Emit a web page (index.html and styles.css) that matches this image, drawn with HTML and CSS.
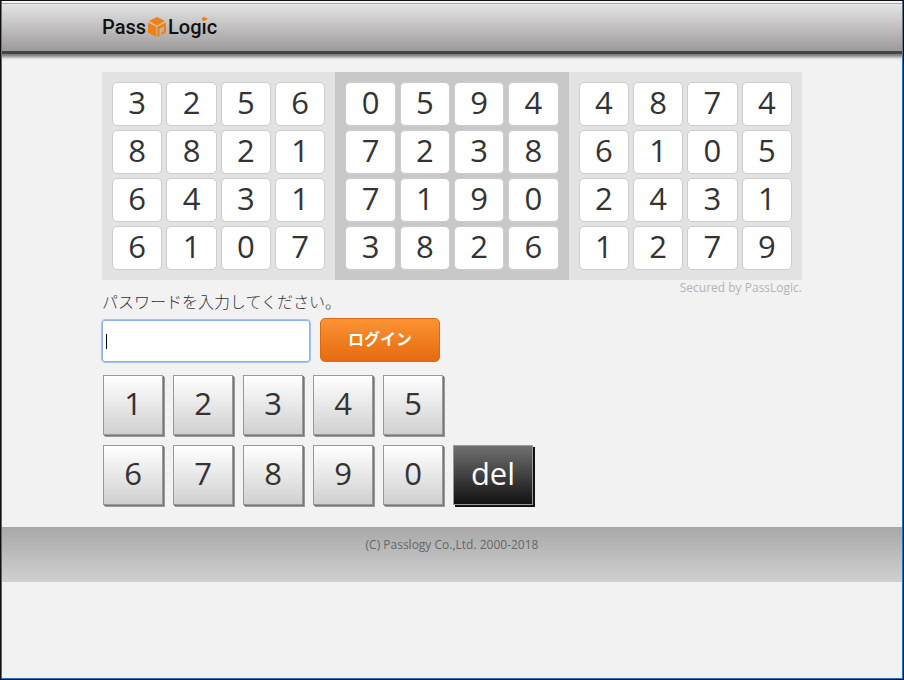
FILE: index.html
```html
<!DOCTYPE html>
<html lang="ja">
<head>
  <meta charset="utf-8">
  <title>PassLogic</title>
  <link rel="stylesheet" href="styles.css">
</head>
<body>
  <header class="header">
    <div class="wrap">
      <a class="logo" href="#">
        <span>Pass</span>
        <svg class="cube" viewBox="0 0 18 20" aria-hidden="true">
          <path d="M9 0 L17 4 L9 8.4 L1 4 Z"/>
          <path d="M0 5.4 L8.3 9.8 V20 L0 15.4 Z"/>
          <path fill-rule="evenodd" d="M18 5.4 L9.3 9.8 V20 L11.6 18.7 V11.9 L15.8 9.6 V13.8 L13.2 15.2 V17.9 L18 15.4 Z M13.2 12.4 V13.6 L14.4 13 V11.8 Z"/>
        </svg>
        <span>Log<span class="key-i">ı</span>c</span>
      </a>
    </div>
  </header>

  <main class="wrap">
    <div class="matrix">
      <div class="block">
        <span>3</span><span>2</span><span>5</span><span>6</span>
        <span>8</span><span>8</span><span>2</span><span>1</span>
        <span>6</span><span>4</span><span>3</span><span>1</span>
        <span>6</span><span>1</span><span>0</span><span>7</span>
      </div>
      <div class="block dark">
        <span>0</span><span>5</span><span>9</span><span>4</span>
        <span>7</span><span>2</span><span>3</span><span>8</span>
        <span>7</span><span>1</span><span>9</span><span>0</span>
        <span>3</span><span>8</span><span>2</span><span>6</span>
      </div>
      <div class="block">
        <span>4</span><span>8</span><span>7</span><span>4</span>
        <span>6</span><span>1</span><span>0</span><span>5</span>
        <span>2</span><span>4</span><span>3</span><span>1</span>
        <span>1</span><span>2</span><span>7</span><span>9</span>
      </div>
    </div>
    <p class="secured">Secured by PassLogic.</p>

    <form id="loginForm">
      <label for="password">パスワードを入力してください。</label>
      <div class="login-row">
        <input type="password" id="password" name="password">
        <button type="submit" class="login">ログイン</button>
      </div>
      <div class="keypad">
        <button type="button">1</button>
        <button type="button">2</button>
        <button type="button">3</button>
        <button type="button">4</button>
        <button type="button">5</button>
        <button type="button">6</button>
        <button type="button">7</button>
        <button type="button">8</button>
        <button type="button">9</button>
        <button type="button">0</button>
        <button type="button" class="del">del</button>
      </div>
    </form>
  </main>

  <footer class="footer">(C) Passlogy Co.,Ltd. 2000-2018</footer>

  <script>
    const password = document.getElementById('password');
    document.querySelectorAll('.keypad button').forEach(function(key) {
      key.onclick = function() {
        if (key.className === 'del') {
          password.value = password.value.slice(0, -1);
        } else {
          password.value += key.innerText;
        }
      };
    });
    document.getElementById('loginForm').onsubmit = function(e) {
      e.preventDefault();
    };
  </script>
</body>
</html>
```
FILE: styles.css
```css
* {
  box-sizing: border-box;
}
html {
  height: 100%;
  background: #f2f2f2;
}
body {
  margin: 0;
  min-height: 100%;
  border: 1px solid #0f0f12;
  background: #f2f2f2;
  box-shadow: inset 1px 0 #1a78c8, inset -1px -1px #1a78c8;
  padding: 0 1px 1px;
  color: #333;
  font-family: "Open Sans", "Noto Sans CJK JP", sans-serif;
  font-size: 16px;
}
.wrap {
  max-width: 700px;
  margin: 0 auto;
}
.header {
  padding-top: 12px;
  height: 50px;
  border-top: 2px solid #f5f3f6;
  background: linear-gradient(#aaa5ab 1px, #e4e4e4 1px, #9d9a9b);
  box-shadow: 0 3px #444, 0 4px 3px 2px #777;
}
.logo {
  display: flex;
  align-items: center;
  gap: 2px;
  height: 24px;
  color: #111;
  font-family: Roboto, sans-serif;
  font-size: 20px;
  font-weight: 500;
  line-height: 24px;
  text-decoration: none;
}
.cube {
  width: 18px;
  height: 20px;
  fill: #f08010;
}
.key-i {
  position: relative;
}
/* orange cross over the i */
.key-i::before {
  content: "";
  position: absolute;
  top: 2px;
  left: 0;
  width: 5px;
  height: 4px;
  background: linear-gradient(#f08010, #f08010) center / 2px 4px no-repeat,
    linear-gradient(#f08010, #f08010) center / 5px 2px no-repeat;
}
.matrix {
  display: grid;
  grid-template-columns: repeat(3, 1fr);
  margin-top: 21px;
}
.block {
  display: grid;
  grid-template-columns: repeat(4, 1fr);
  gap: 4px;
  padding: 10px;
  background: #e2e2e2;
}
.block.dark {
  background: #c8c8c8;
}
.block span {
  height: 44px;
  border: 1px solid #ccc;
  border-radius: 5px;
  background: #fff;
  font-size: 31px;
  line-height: 38px;
  text-align: center;
}
.secured {
  margin: 0;
  color: #b4b4b4;
  font-size: 12px;
  line-height: 16px;
  text-align: right;
}
label {
  display: block;
  margin-top: -5px;
  font-family: "Noto Sans CJK JP", sans-serif;
  font-weight: 300;
  line-height: 20px;
}
.login-row {
  display: flex;
  align-items: center;
  gap: 10px;
  margin-top: 7px;
}
#password {
  width: 208px;
  height: 42px;
  margin-top: 2px;
  padding: 0 4px;
  border: 1px solid #8eb2ea;
  border-radius: 3px;
  outline: 1px solid #a3c1f0;
  /* thin text cursor */
  background: linear-gradient(#000, #000) 3px 13px / 1px 15px no-repeat #fff;
  font-size: 31px;
}
.login {
  width: 120px;
  height: 44px;
  padding: 0 0 4px;
  border: 1px solid #da6a12;
  border-radius: 5px;
  background: linear-gradient(#fb9333, #e66a10);
  color: #fff;
  font-family: "Noto Sans CJK JP", sans-serif;
  font-size: 16px;
  font-weight: bold;
  cursor: pointer;
}
.keypad {
  display: grid;
  grid-template-columns: repeat(5, 60px) 80px;
  gap: 10px;
  margin: 13px 1px 22px;
}
.keypad button {
  height: 60px;
  padding: 0 0 5px;
  border: 1px solid #999;
  background: linear-gradient(#fff, #d0d0d0);
  box-shadow: 1px 1px #777, 2px 2px #999;
  color: #333;
  font-family: inherit;
  font-size: 31px;
  cursor: pointer;
}
.keypad button:nth-child(6) {
  grid-column: 1;
}
.keypad .del {
  background: linear-gradient(#707070, #111);
  box-shadow: 2px 2px #111;
  color: #fff;
}
.footer {
  height: 55px;
  padding-top: 10px;
  background: linear-gradient(#a8a8a8, #d0d0d0);
  color: #666;
  font-size: 12px;
  line-height: 16px;
  text-align: center;
}
```
